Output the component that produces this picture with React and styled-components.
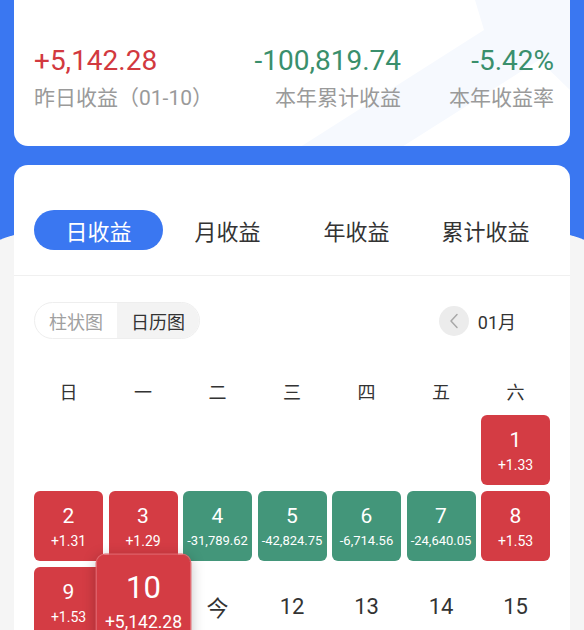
import React from 'react'
import styled, { createGlobalStyle } from 'styled-components'

const GlobalStyle = createGlobalStyle`
  body{
    margin: 0;
    background: #f5f5f5;
    font-family: Roboto, "Noto Sans CJK SC", sans-serif;
    overflow: hidden;
  }
`

const summary = [
  { value: '+5,142.28', label: '昨日收益（01-10）', tone: 'up', align: 'left' },
  { value: '-100,819.74', label: '本年累计收益', tone: 'down', align: 'right' },
  { value: '-5.42%', label: '本年收益率', tone: 'down', align: 'right' },
]

const tabs = ['日收益', '月收益', '年收益', '累计收益']
const weekdays = ['日', '一', '二', '三', '四', '五', '六']

// null = empty slot before the 1st
const days = [
  null, null, null, null, null, null,
  { day: '1', value: '+1.33', tone: 'up' },
  { day: '2', value: '+1.31', tone: 'up' },
  { day: '3', value: '+1.29', tone: 'up' },
  { day: '4', value: '-31,789.62', tone: 'down' },
  { day: '5', value: '-42,824.75', tone: 'down' },
  { day: '6', value: '-6,714.56', tone: 'down' },
  { day: '7', value: '-24,640.05', tone: 'down' },
  { day: '8', value: '+1.53', tone: 'up' },
  { day: '9', value: '+1.53', tone: 'up' },
  { day: '10', value: '+5,142.28', tone: 'up', active: true },
  { day: '今' },
  { day: '12' },
  { day: '13' },
  { day: '14' },
  { day: '15' },
]

function App() {
  return (
    <Page>
      <GlobalStyle />
      <SummaryCard>
        <Watermark viewBox="0 0 556 166" preserveAspectRatio="none">
          <path d="M250 190 L470 50 L455 0 L556 0 L556 110 L525 80 L320 210 Z" fill="#f6f9fe" />
        </Watermark>
        <SummaryGrid>
          {summary.map((s, i) => (
            <Stat key={i} align={s.align}>
              <StatValue tone={s.tone}>{s.value}</StatValue>
              <StatLabel>{s.label}</StatLabel>
            </Stat>
          ))}
        </SummaryGrid>
      </SummaryCard>

      <MainCard>
        <Tabs>
          {tabs.map((t, i) => (
            <Tab key={t} active={i === 0}>{t}</Tab>
          ))}
        </Tabs>
        <Body>
          <Toolbar>
            <Switch>
              <SwitchItem>柱状图</SwitchItem>
              <SwitchItem active>日历图</SwitchItem>
            </Switch>
            <MonthNav>
              <RoundBtn>
                <svg width="10" height="16" viewBox="0 0 10 16">
                  <polyline points="8,1.5 2,8 8,14.5" fill="none" stroke="#a8a8a8" strokeWidth="1.5" strokeLinecap="round" strokeLinejoin="round" />
                </svg>
              </RoundBtn>
              <Month>01月</Month>
            </MonthNav>
          </Toolbar>

          <WeekHead>
            {weekdays.map(w => <WeekDay key={w}>{w}</WeekDay>)}
          </WeekHead>

          <Calendar>
            {days.map((d, i) => {
              if (!d) return <Blank key={i} />
              if (!d.value) return <PlainDay key={i}>{d.day}</PlainDay>
              return (
                <DayCell key={i} tone={d.tone} active={d.active}>
                  <DayNum active={d.active}>{d.day}</DayNum>
                  <DayValue long={d.value.length > 6}>{d.value}</DayValue>
                </DayCell>
              )
            })}
          </Calendar>
        </Body>
      </MainCard>
    </Page>
  )
}

export default App

const Page = styled.div`
  width: 584px;
  height: 630px;
  box-sizing: border-box;
  padding: 0 14px;
  overflow: hidden;
  background:
    radial-gradient(ellipse 300px 30px at 50% 246px, #f5f5f5 99%, transparent 100%),
    linear-gradient(#3a77f1, #3a77f1) 0 0 / 100% 246px no-repeat,
    #f5f5f5;
`

const SummaryCard = styled.div`
  position: relative;
  margin-top: -20px;
  height: 166px;
  box-sizing: border-box;
  padding: 64px 16px 0 20px;
  background: #fff;
  border-radius: 14px;
  overflow: hidden;
`

const Watermark = styled.svg`
  position: absolute;
  left: 0;
  top: 0;
  width: 100%;
  height: 100%;
`

const SummaryGrid = styled.div`
  position: relative;
  display: grid;
  grid-template-columns: 1fr 160px 153px;
`

const Stat = styled.div`
  display: flex;
  flex-direction: column;
  align-items: ${p => (p.align === 'right' ? 'flex-end' : 'flex-start')};
  white-space: nowrap;
`

const StatValue = styled.div`
  font-size: 28px;
  line-height: 34px;
  color: ${p => (p.tone === 'up' ? '#d2393f' : '#3a8f6c')};
`

const StatLabel = styled.div`
  margin-top: 6px;
  font-size: 21px;
  line-height: 28px;
  color: #9a9a9a;
`

const MainCard = styled.div`
  margin-top: 19px;
  height: 520px;
  background: #fff;
  border-radius: 14px 14px 0 0;
`

const Tabs = styled.div`
  display: grid;
  grid-template-columns: repeat(4, 1fr);
  padding: 45px 20px 25px;
  border-bottom: 1px solid #f0f0f0;
`

const Tab = styled.div`
  height: 40px;
  border-radius: 20px;
  display: flex;
  align-items: center;
  justify-content: center;
  font-size: 22px;
  color: ${p => (p.active ? '#fff' : '#333')};
  background: ${p => (p.active ? '#3a77f1' : 'transparent')};
`

const Body = styled.div`
  padding: 26px 20px 0;
`

const Toolbar = styled.div`
  display: flex;
  align-items: center;
  justify-content: space-between;
`

const Switch = styled.div`
  display: flex;
  height: 37px;
  box-sizing: border-box;
  border: 1px solid #eeeeee;
  border-radius: 19px;
  overflow: hidden;
`

const SwitchItem = styled.div`
  display: flex;
  align-items: center;
  justify-content: center;
  width: 82px;
  font-size: 18px;
  color: ${p => (p.active ? '#333' : '#a0a0a0')};
  background: ${p => (p.active ? '#f3f3f3' : 'transparent')};
`

const MonthNav = styled.div`
  display: flex;
  align-items: center;
  gap: 9px;
  padding-right: 34px;
`

const RoundBtn = styled.div`
  width: 30px;
  height: 30px;
  border-radius: 50%;
  background: #ececec;
  display: flex;
  align-items: center;
  justify-content: center;
`

const Month = styled.div`
  font-size: 18px;
  color: #333;
`

const WeekHead = styled.div`
  display: grid;
  grid-template-columns: repeat(7, 1fr);
  column-gap: 5.5px;
  margin: 32px 0 4px;
  height: 40px;
  align-items: center;
`

const WeekDay = styled.div`
  text-align: center;
  font-size: 18px;
  color: #333;
`

const Calendar = styled.div`
  display: grid;
  grid-template-columns: repeat(7, 1fr);
  grid-auto-rows: 70px;
  gap: 6px 5.5px;
`

const Blank = styled.div``

const DayCell = styled.div`
  position: relative;
  display: flex;
  flex-direction: column;
  align-items: center;
  justify-content: center;
  gap: 5px;
  border-radius: 6px;
  color: #fff;
  white-space: nowrap;
  background: ${p => (p.tone === 'up' ? '#d43c44' : '#43967a')};
  ${p => p.active && `
    z-index: 2;
    transform: scale(1.35);
    outline: 1px solid #e2636b;
    box-shadow: 0 2px 10px rgba(0,0,0,0.25);
  `}
`

const DayNum = styled.div`
  font-size: ${p => (p.active ? '23px' : '21px')};
  line-height: 24px;
`

const DayValue = styled.div`
  font-size: ${p => (p.long ? '13px' : '14px')};
  line-height: 16px;
`

const PlainDay = styled.div`
  display: flex;
  align-items: center;
  justify-content: center;
  padding-top: 8px;
  font-size: 22px;
  color: #333;
`
